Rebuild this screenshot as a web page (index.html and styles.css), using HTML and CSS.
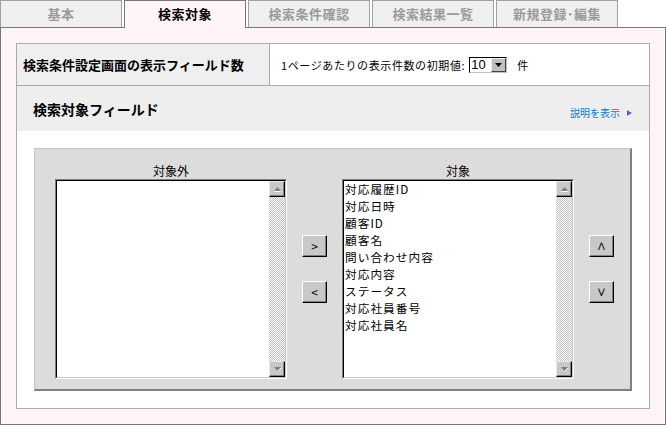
FILE: index.html
```html
<!DOCTYPE html>
<html lang="ja">
<head>
<meta charset="utf-8">
<title>検索対象</title>
<link rel="stylesheet" href="styles.css">
</head>
<body>
<div class="tabs">
  <div class="tab">基本</div>
  <div class="tab active">検索対象</div>
  <div class="tab">検索条件確認</div>
  <div class="tab">検索結果一覧</div>
  <div class="tab">新規登録･編集</div>
</div>
<div class="frame">
  <div class="box">
    <div class="row">
      <div class="label">検索条件設定画面の表示フィールド数</div>
      <div class="value">
        <span class="vtext">1ページあたりの表示件数の初期値:</span>
        <span class="select"><span class="sel-val">10</span><span class="sel-btn"><svg width="7" height="4" viewBox="0 0 7 4"><path d="M0 0h7L3.5 4z" fill="#000"/></svg></span></span>
        <span>件</span>
      </div>
    </div>
    <div class="head">
      <div class="title">検索対象フィールド</div>
      <a class="help">説明を表示<svg class="tri" width="5" height="6" viewBox="0 0 5 6"><path d="M0 0L5 3L0 6z" fill="#5c5ccf"/></svg></a>
    </div>
    <div class="panel">
      <div class="cap">対象外</div>
      <div></div>
      <div class="cap">対象</div>
      <div></div>

      <div class="list"><div class="list-in">
        <div class="items"></div>
        <div class="sbar">
          <div class="sbtn"><svg width="7" height="5" viewBox="0 0 7 5"><path d="M3.5 0L7 4H0z" fill="#808080"/><path d="M0 4.5h7" stroke="#fff" stroke-width="1"/></svg></div>
          <div class="sbtn"><svg width="7" height="5" viewBox="0 0 7 5"><path d="M0 0h7L3.5 4z" fill="#808080"/><path d="M3.5 4.5L7 1" stroke="#fff" stroke-width="1"/></svg></div>
        </div>
      </div></div>

      <div class="btns"><button class="btn">&gt;</button><button class="btn">&lt;</button></div>

      <div class="list"><div class="list-in">
        <div class="items">
          <div>対応履歴ID</div>
          <div>対応日時</div>
          <div>顧客ID</div>
          <div>顧客名</div>
          <div>問い合わせ内容</div>
          <div>対応内容</div>
          <div>ステータス</div>
          <div>対応社員番号</div>
          <div>対応社員名</div>
        </div>
        <div class="sbar">
          <div class="sbtn"><svg width="7" height="5" viewBox="0 0 7 5"><path d="M3.5 0L7 4H0z" fill="#808080"/><path d="M0 4.5h7" stroke="#fff" stroke-width="1"/></svg></div>
          <div class="sbtn"><svg width="7" height="5" viewBox="0 0 7 5"><path d="M0 0h7L3.5 4z" fill="#808080"/><path d="M3.5 4.5L7 1" stroke="#fff" stroke-width="1"/></svg></div>
        </div>
      </div></div>

      <div class="btns"><button class="btn sym">∧</button><button class="btn sym">∨</button></div>
    </div>
  </div>
</div>
</body>
</html>
```

FILE: styles.css
```css
* { box-sizing: border-box; margin: 0; padding: 0; }
html, body { width: 666px; height: 425px; overflow: hidden; background: #fff; }
body {
  font-family: "Noto Sans CJK JP", "Liberation Sans", sans-serif;
  color: #000;
}

.tabs { display: flex; align-items: flex-start; gap: 2px; height: 27px; }
.tab {
  width: 122px; height: 27px;
  border: 1px solid #a0a0a0; border-bottom: none;
  background: #efefef; color: #9a9a9a;
  font-size: 13px; font-weight: bold; line-height: 26px; text-align: center;
  letter-spacing: 0.5px;
}
.tab.active {
  height: 28px; margin-bottom: -1px;
  background: #fff5f8; border-color: #777; color: #000;
  position: relative; z-index: 1;
}

.frame { border: 1px solid #777; background: #fff5f8; padding: 15px; }
.box { border: 1px solid #aaa; background: #fff; }

.row { display: flex; height: 42px; border-bottom: 1px solid #aaa; }
.label {
  width: 253px; background: #efefef; border-right: 1px solid #aaa;
  padding-left: 6px; display: flex; align-items: center;
  font-size: 13px; font-weight: bold; line-height: 16px;
}
.value {
  flex: 1; display: flex; align-items: center; padding-left: 11px;
  font-size: 11px; line-height: 16px;
}
.vtext { letter-spacing: 0.6px; }
.select {
  display: inline-flex; width: 38px; height: 16px; margin: 0 10px 0 4px;
  background: #fff; border: 1px solid; border-color: #000 #c0c0c0 #c0c0c0 #000;
}
.sel-val { flex: 1; font-family: "Liberation Sans", sans-serif; font-size: 13px; line-height: 14px; padding-left: 1px; }
.sel-btn {
  width: 15px; display: flex; align-items: center; justify-content: center;
  background: #c0c0c0; border: 1px solid; border-color: #eee #404040 #404040 #eee;
}

.head {
  display: flex; justify-content: space-between; height: 45px;
  background: #eee; padding: 0 17px 0 16px;
}
.title { align-self: center; font-size: 14px; font-weight: bold; line-height: 16px; }
.help {
  align-self: center; margin-top: 8px; display: flex; align-items: center;
  color: #0b78c8; font-size: 10px; line-height: 12px;
}
.help .tri { margin-left: 7px; }

.panel {
  margin: 17px; background: #dcdcdc;
  border-top: 1px solid #c4c4c4; border-left: 1px solid #c4c4c4;
  border-right: 2px solid #808080; border-bottom: 2px solid #808080;
  display: grid; grid-template-columns: 232px 25px 232px 25px;
  grid-template-rows: 30px 200px; column-gap: 15px;
  padding: 0 15px 10px 20px;
}
.cap { align-self: end; text-align: center; font-size: 12px; line-height: 17px; }

.list { border: 1px solid; border-color: #808080 #fff #fff #808080; }
.list-in {
  height: 100%; display: flex;
  border: 1px solid; border-color: #000 #c8c8c8 #c8c8c8 #000; background: #fff;
}
.items {
  flex: 1; padding-left: 1px; margin-top: -1px;
  font-size: 11.7px; letter-spacing: 1px; line-height: 17px;
}
.sbar {
  width: 16px; display: flex; flex-direction: column; justify-content: space-between;
  background-color: #fff;
  background-image: repeating-conic-gradient(#c0c0c0 0 25%, #fff 0 50%);
  background-size: 2px 2px;
}
.sbtn {
  width: 16px; height: 16px; background: #c8c8c8;
  border: 1px solid; border-color: #e8e8e8 #000 #000 #e8e8e8;
  box-shadow: inset -1px -1px #808080;
  display: flex; align-items: center; justify-content: center;
}

.btns { display: flex; flex-direction: column; gap: 24px; padding-top: 56px; }
.btn {
  width: 25px; height: 22px; background: #c8c8c8;
  border: 1px solid; border-color: #fff #000 #000 #fff;
  box-shadow: inset -1px -1px #808080;
  font-family: "Noto Sans CJK JP", sans-serif; font-size: 12px; line-height: 18px;
  color: #000; text-align: center;
}
.btn.sym { font-family: "DejaVu Sans", sans-serif; font-size: 13px; font-weight: 300; }
```
